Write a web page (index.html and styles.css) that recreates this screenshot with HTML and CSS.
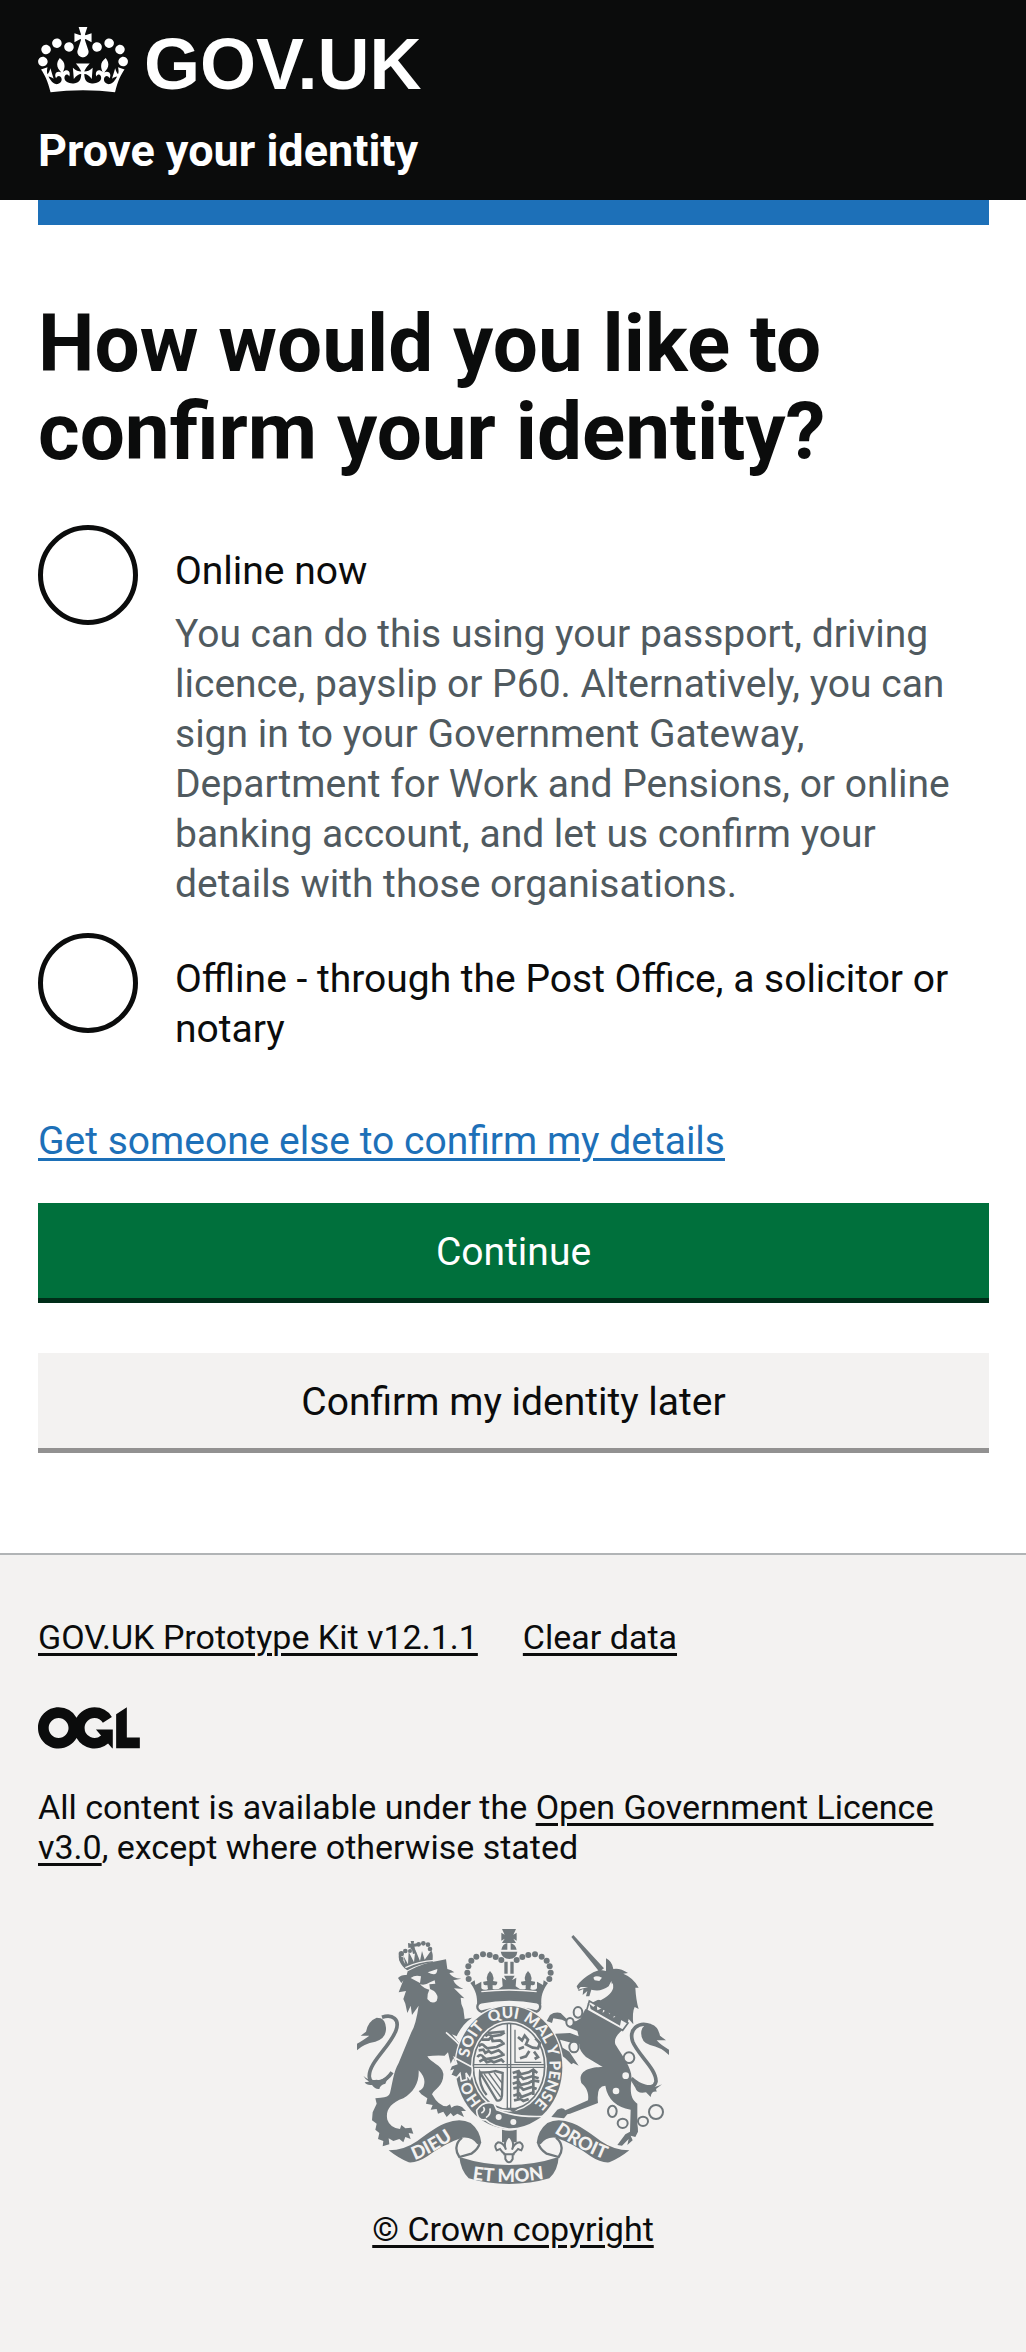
FILE: index.html
```
<!DOCTYPE html>
<html lang="en">
<head>
<meta charset="utf-8">
<meta name="viewport" content="width=device-width, initial-scale=1">
<title>How would you like to confirm your identity? - Prove your identity - GOV.UK</title>
<link rel="stylesheet" href="styles.css">
</head>
<body>
<header class="header">
  <a class="header-logo" href="#">
    <svg class="header-crown" viewBox="0 0 132 97" aria-hidden="true"><path fill="currentColor" fill-rule="evenodd" d="M25 30.2c3.5 1.5 7.7-.2 9.1-3.7 1.5-3.6-.2-7.8-3.9-9.2-3.6-1.4-7.6.3-9.1 3.9-1.4 3.5.3 7.5 3.9 9zM9 39.5c3.6 1.5 7.8-.2 9.2-3.7 1.5-3.6-.2-7.8-3.9-9.1-3.6-1.5-7.6.2-9.1 3.8-1.4 3.5.3 7.5 3.8 9zM4.4 57.2c3.5 1.5 7.7-.2 9.1-3.8 1.5-3.6-.2-7.7-3.9-9.1-3.5-1.5-7.6.3-9.1 3.8-1.4 3.5.3 7.6 3.9 9.1zm38.3-21.4c3.5 1.5 7.7-.2 9.1-3.8 1.5-3.6-.2-7.7-3.9-9.1-3.6-1.5-7.6.3-9.1 3.8-1.3 3.6.4 7.7 3.9 9.1zm64.4-5.6c-3.6 1.5-7.8-.2-9.1-3.7-1.5-3.6.2-7.8 3.8-9.2 3.6-1.4 7.7.3 9.2 3.9 1.3 3.5-.4 7.5-3.9 9zm15.9 9.3c-3.6 1.5-7.7-.2-9.1-3.7-1.5-3.6.2-7.8 3.7-9.1 3.6-1.5 7.7.2 9.2 3.8 1.5 3.5-.3 7.5-3.8 9zm4.7 17.7c-3.6 1.5-7.8-.2-9.2-3.8-1.5-3.6.2-7.7 3.9-9.1 3.6-1.5 7.7.3 9.2 3.8 1.3 3.5-.4 7.6-3.9 9.1zM89.3 35.8c-3.6 1.5-7.8-.2-9.2-3.8-1.4-3.6.2-7.7 3.9-9.1 3.6-1.5 7.7.3 9.2 3.8 1.4 3.6-.3 7.7-3.9 9.1zM69.7 17.7l8.9 4.7V9.3l-8.9 2.8c-.2-.3-.5-.6-.9-.9L72.4 0H59.6l3.5 11.2c-.3.3-.6.5-.9.9l-8.8-2.8v13.1l8.8-4.7c.3.3.6.7.9.9l-5 15.4v.1c-.2.8-.4 1.6-.4 2.4 0 4.1 3.1 7.5 7 8.1h.2c.3 0 .7.1 1 .1.4 0 .7 0 1-.1h.2c4-.6 7.1-4.1 7.1-8.1 0-.8-.1-1.7-.4-2.4V34l-5.1-15.4c.4-.2.7-.6 1-.9zM66 92.8c16.9 0 32.8 1.1 47.1 3.2 4-16.9 8.9-26.7 14-33.5l-9.6-3.4c1 4.9 1.1 7.2 0 10.2-1.5-1.4-3-4.3-4.2-8.7L108.6 76c2.8-2 5-3.2 7.5-3.3-4.4 9.4-10 11.9-13.6 11.2-4.3-.8-6.3-4.6-5.6-7.9 1-4.7 5.7-5.9 8-.5 4.3-8.7-3-11.4-7.6-8.8 7.1-7.2 7.9-13.5 2.1-21.1-8 6.1-8.1 12.3-4.5 20.8-4.7-5.4-12.1-2.5-9.5 6.2 3.4-5.2 7.9-2 7.2 3.1-.6 4.3-6.4 7.8-13.5 7.2-10.3-.9-10.9-8-11.2-13.8 2.5-.5 7.1 1.8 11 7.3L80.2 60c-4.1 4.4-8 5.3-12.3 5.4 1.4-4.4 8-11.6 8-11.6H55.5s6.4 7.2 7.9 11.6c-4.2-.1-8-1-12.3-5.4l1.4 16.4c3.9-5.5 8.5-7.7 10.9-7.3-.3 5.8-.9 12.8-11.1 13.8-7.2.6-12.9-2.9-13.5-7.2-.7-5 3.8-8.3 7.1-3.1 2.7-8.7-4.6-11.6-9.4-6.2 3.7-8.5 3.6-14.7-4.6-20.8-5.8 7.6-5 13.9 2.2 21.1-4.7-2.6-11.9.1-7.7 8.8 2.3-5.5 7.1-4.2 8.1.5.7 3.3-1.3 7.1-5.7 7.9-3.5.7-9-1.8-13.5-11.2 2.5.1 4.7 1.3 7.5 3.3l-4.7-15.4c-1.2 4.4-2.7 7.2-4.3 8.7-1.1-3-.9-5.3 0-10.2l-9.5 3.4c5 6.9 9.9 16.7 14 33.5 14.8-2.1 30.8-3.2 47.7-3.2z"/></svg>
    <span class="header-name">GOV.UK</span>
  </a>
  <a class="header-service" href="#">Prove your identity</a>
</header>

<div class="container">
  <main class="main">
    <form>
      <fieldset class="fieldset">
        <legend class="legend"><h1 class="heading">How would you like to confirm your identity?</h1></legend>
        <div class="radios">
          <div class="radio">
            <input class="radio-input" type="radio" id="online" name="method" value="online" aria-describedby="online-hint">
            <div class="radio-text">
              <label class="radio-label" for="online">Online now</label>
              <div class="hint" id="online-hint">You can do this using your passport, driving licence, payslip or P60. Alternatively, you can sign in to your Government Gateway, Department for Work and Pensions, or online banking account, and let us confirm your details with those organisations.</div>
            </div>
          </div>
          <div class="radio">
            <input class="radio-input" type="radio" id="offline" name="method" value="offline">
            <div class="radio-text">
              <label class="radio-label" for="offline">Offline - through the Post Office, a solicitor or notary</label>
            </div>
          </div>
        </div>
      </fieldset>
      <p class="other-way"><a class="link" href="#">Get someone else to confirm my details</a></p>
      <div class="button-group">
        <button class="button" type="submit">Continue</button>
        <button class="button button-secondary" type="button">Confirm my identity later</button>
      </div>
    </form>
  </main>
</div>

<footer class="footer">
  <ul class="footer-links">
    <li><a class="footer-link" href="#">GOV.UK Prototype Kit v12.1.1</a></li>
    <li><a class="footer-link" href="#">Clear data</a></li>
  </ul>
  <svg class="ogl" viewBox="0 0 484 196" aria-hidden="true"><path fill="currentColor" d="M421.5 142.8V.1l-50.7 32.3v161.1h112.4v-50.7zm-122.3-9.6A47.12 47.12 0 0 1 221 97.8c0-26 21.1-47.1 47.1-47.1 16.7 0 31.4 8.7 39.7 21.8l42.7-27.2A97.63 97.63 0 0 0 268.1 0c-36.5 0-68.3 20.1-85.1 49.7A98 98 0 0 0 97.8 0C43.9 0 0 43.9 0 97.8s43.9 97.8 97.8 97.8c36.5 0 68.3-20.1 85.1-49.7a97.76 97.76 0 0 0 149.6 25.4l19.4 22.2h3v-87.8h-80l24.3 27.5zM97.8 145c-26 0-47.1-21.1-47.1-47.1s21.1-47.1 47.1-47.1 47.1 21.1 47.1 47.1S123.8 145 97.8 145"/></svg>
  <p class="licence">All content is available under the <a class="footer-link" href="#">Open Government Licence v3.0</a>, except where otherwise stated</p>
  <div class="copyright">
    <svg class="crest" viewBox="51 60 936 765" aria-hidden="true">
      <defs>
        <path id="garter-line" d="M507 615A122 144 0 0 1 507 327A122 144 0 0 1 507 615"/>
        <path id="dieu-line" d="M224 753Q290 728 364 672"/>
        <path id="mon-line" d="M397 811Q507 828 624 808"/>
        <path id="droit-line" d="M642 670Q720 724 810 758"/>
      </defs>

      <!-- Crown -->
      <path d="M486 60h42l-8 17 10-6v24l-10-6 8 13h-42l8-13-10 6V71l10 6zM484 122q4-18 18-20v20zM512 102q14 4 18 20h-18zM482 128h50q-2 20-24 22-22-2-26-22z"/>
      <g>
        <circle cx="484" cy="153" r="9"/><circle cx="467" cy="144" r="9"/><circle cx="449" cy="138" r="9"/><circle cx="429" cy="136" r="9"/><circle cx="409" cy="143" r="9"/><circle cx="394" cy="155" r="9"/><circle cx="385" cy="172" r="9"/><circle cx="382" cy="191" r="9"/><circle cx="386" cy="210" r="9"/>
        <circle cx="530" cy="153" r="9"/><circle cx="547" cy="144" r="9"/><circle cx="565" cy="138" r="9"/><circle cx="585" cy="136" r="9"/><circle cx="605" cy="143" r="9"/><circle cx="620" cy="155" r="9"/><circle cx="629" cy="172" r="9"/><circle cx="632" cy="191" r="9"/><circle cx="628" cy="210" r="9"/>
      </g>
      <path d="M493 158h10v36h-10zM511 158h10v36h-10z"/>
      <path d="M411 286C413 258 404 240 391 222L404 214 406 228 424 218V238Q432 246 444 240L442 228Q428 232 430 218L442 216Q436 200 450 186 465 200 459 216L472 218Q472 232 458 228L458 240Q476 244 488 232L486 206 499 214 492 200H524L516 214 529 206 527 232Q540 244 557 240L557 228Q543 232 543 218L556 216Q550 200 564 186 579 200 573 216L585 218Q587 232 573 228L571 240Q584 246 591 238V218L609 228 611 214 624 222C611 240 602 258 604 286Q507 262 411 286Z"/>
      <path class="line" d="M424 248Q507 238 590 248" stroke-width="4"/>
      <path class="bare" d="M424 308C408 302 408 284 424 280Q507 264 592 280C604 284 604 302 590 308Q507 284 424 308Z" stroke-width="7"/>

      <!-- Lion -->
      <path d="M202 184C180 170 172 146 178 132L196 166 190 140 204 166 206 128 222 160 226 122 240 156 246 126 254 152 274 124C282 140 276 150 279 160Q238 164 202 184Z"/>
      <g><circle cx="184" cy="134" r="8"/><circle cx="184" cy="150" r="7"/><circle cx="196" cy="126" r="7"/><circle cx="210" cy="126" r="6"/><circle cx="236" cy="106" r="7"/><circle cx="250" cy="103" r="7"/><circle cx="264" cy="107" r="7"/><circle cx="270" cy="120" r="7"/><circle cx="217" cy="116" r="6"/></g>
      <path d="M204 102l10 2-2-8 10 0-1 8 10-1 2 9-10 1 6 20-10 2-5-20-9 2z"/>
      <path class="line" d="M196 176Q236 156 284 154" stroke-width="4"/>
      <path d="M174 207Q184 196 200 198L203 187Q252 160 292 156L318 151 322 180Q334 182 343 190L328 192Q336 208 364 209L340 214Q346 230 370 240L342 238Q360 256 373 268L362 266Q362 284 370 300L374 330 396 326Q366 346 350 382L336 376Q362 410 384 432 382 466 398 492L388 508 378 488 382 512 366 514 362 492 352 504 336 498 338 484 328 488Q332 470 348 464L340 448 332 464 324 430 314 440Q286 438 262 442C270 460 306 468 310 494 312 530 284 540 276 556Q296 592 320 592L330 586 334 596Q350 584 366 594L378 606 364 606 372 624 352 614 340 622 332 612 320 624 310 608 294 614 290 600 272 602 278 588 258 584 262 568 244 556 236 546Q250 540 252 528 258 506 236 484C238 520 222 550 190 568 150 582 136 606 142 632Q150 656 180 660L184 648 196 658 214 656 220 674 206 672 212 690 196 684 190 700 178 690 160 696 146 688 148 706 128 712 130 696 114 690 118 672 106 662 110 644 96 634 98 610 110 584 106 568 122 566Q146 566 150 552C158 520 160 490 176 462L214 370Q228 346 236 290L216 318 212 290 202 312 196 284 190 270 198 246 176 250 190 214 184 222Z"/>
      <path class="bare-fill" d="M212 207Q226 196 243 202L240 222ZM263 190Q276 186 292 180 292 206 263 190ZM240 226Q256 230 270 220L284 214 286 224 268 226 270 240 282 246Q298 260 290 276 276 288 262 270 262 252 268 242 254 240 240 226Z"/>
      <path class="line" d="M318 370Q350 396 372 424 380 450 376 470" stroke-width="5"/>
      <path class="stroke" d="M126 325C158 314 180 332 168 364 150 414 84 462 88 504 92 540 140 516 156 490" stroke-width="11"/>
      <path d="M51 404V424Q70 404 106 398 140 388 138 356 136 334 122 328L110 326Q84 336 78 368L62 380H88Q66 396 51 404ZM70 500Q84 516 110 512 130 516 148 496L136 524Q120 528 118 540 106 542 96 528 80 530 74 520L88 518Q76 512 70 500Z"/>

      <!-- Unicorn -->
      <path d="M694 84L700 78 792 178 778 188ZM798 148Q816 156 820 180 840 176 864 192L850 194Q880 206 896 236L886 236Q888 274 896 300L884 294Q876 310 880 346L866 330 860 352Q810 322 742 284 780 278 814 240 818 228 814 216L806 232Q782 250 754 242L748 262 738 262 742 246 728 258 730 240 716 246 710 232Q724 210 760 190L780 182 798 186Z"/>
      <path class="bare-fill" d="M760 206Q768 198 786 206L778 216 764 214ZM714 242L744 234 722 234ZM756 268Q802 254 818 222 828 250 782 274Z"/>
      <path d="M736 300L846 364C828 380 822 392 826 406 848 444 880 480 874 516 870 548 872 570 892 584V644Q894 656 894 668L886 684 872 680 878 694 862 708 866 690 846 710 832 708 856 676 870 668 872 602Q806 590 796 530 768 530 774 582L690 614 682 616 672 628 634 624 652 602Q668 592 676 604L744 574C748 548 736 532 724 522 712 486 748 474 788 474L738 444Q716 424 718 406L688 400 660 392 668 416 688 428 700 446 716 470 700 462 694 466 676 448 666 440 640 384 646 374 690 372 716 382 712 366 688 356 690 344 666 332 640 328 636 342 620 336 630 318Q644 308 662 312L684 334Q704 344 722 328Z"/>
      <path class="bare" d="M748 276L864 342 848 364 740 304Z" stroke-width="5"/>
      <path d="M752 300L748 284 760 294 770 284 772 304 790 296 788 312 800 300 808 316 826 308 820 326 836 318 844 330 840 350Z"/>
      <g class="bare" stroke-width="6"><ellipse cx="714" cy="310" rx="13" ry="16"/><ellipse cx="690" cy="340" rx="11" ry="13"/><ellipse cx="702" cy="414" rx="14" ry="16"/><circle cx="867" cy="446" r="16"/><ellipse cx="817" cy="607" rx="13" ry="17"/><ellipse cx="848" cy="643" rx="15" ry="14"/><ellipse cx="909" cy="637" rx="15" ry="14"/><circle cx="948" cy="609" r="21"/></g>
      <g class="bare-fill"><circle cx="857" cy="500" r="10"/><circle cx="828" cy="546" r="10"/></g>
      <path class="stroke" d="M932 350C894 336 866 362 878 398 894 438 950 480 948 518 940 550 892 526 874 508" stroke-width="11"/>
      <path d="M987 422V438Q962 414 930 408 900 398 904 366 908 344 934 346 954 352 960 380L978 394 950 394Q962 408 987 422ZM870 510Q890 532 914 534 936 540 966 526L948 540 950 548Q934 546 932 564L918 550Q892 556 886 536Z"/>

      <!-- Garter and shield -->
      <ellipse class="edge" cx="507" cy="475" rx="164" ry="188"/>
      <ellipse cx="507" cy="475" rx="160" ry="184"/>
      <ellipse class="bare-fill" cx="507" cy="472" rx="114" ry="136"/>
      <ellipse class="stroke" cx="507" cy="472" rx="107" ry="129" stroke-width="5"/>
      <path class="stroke" d="M502 344V600M512 344V600M400 467H614M400 475H614" stroke-width="4"/>
      <g class="stroke" stroke-width="8">
        <path d="M444 372l50-4M436 382q10-12 18 0l28-4 12-8M424 392h22l8-8 4 12 22-2 8 6M416 412q10-12 18 0l8 6 28-4 24-12M416 424l14-2 6 10 10-6 8 6 22-8 12 10M412 444q10-12 18 0l8 6 28-4 28-10M418 458l14-8 8 10 14-4 8 4 22-8 8 8"/>
        <path d="M534 384l12 10 8-14 10 12-6 14 20 10 16 2 6-16-14-14M552 414l-16 6M568 426l-10 16-18 6M582 428l12 16-10 6"/>
        <path d="M525 362V460H604" stroke-width="4"/>
        <path d="M518 492l18-6 6 10 24-6 14-8 12 10M520 506l22-4 8 8 26-8 20 6M518 524l18-6 6 10 24-6 14-8 18 4M520 538l22-4 8 8 26-8 14 6M520 560l18-6 6 10 22-8 14-6M522 574l20-4 8 6 16-6M534 486v86M580 484v74"/>
      </g>
      <path class="stroke" d="M420 490Q446 492 466 486L488 492 486 560Q484 578 470 574L420 490Q416 530 440 558" stroke-width="7"/>
      <path class="stroke" d="M432 494L482 564M446 492L484 544M462 490L486 522" stroke-width="4"/>
      <path d="M498 596H538L520 610Z"/>
      <g class="arms-text" font-size="46">
        <text><textPath href="#garter-line" startOffset="11%">HO</textPath></text>
        <text><textPath href="#garter-line" startOffset="28%">SOIT</textPath></text>
        <text><textPath href="#garter-line" startOffset="43%">QUI</textPath></text>
        <text><textPath href="#garter-line" startOffset="55%">MAL</textPath></text>
        <text><textPath href="#garter-line" startOffset="68%">Y</textPath></text>
        <text><textPath href="#garter-line" startOffset="73%">PENSE</textPath></text>
      </g>
      <path class="edge-fill" d="M410 604Q432 572 462 584L470 602Q530 626 612 622L590 636Q550 662 506 660 456 652 436 632 412 636 410 604Z"/>
      <circle class="bare-fill" cx="476" cy="624" r="9"/><circle class="bare-fill" cx="520" cy="639" r="9"/>
      <path class="line" d="M424 612Q438 604 430 594M438 626Q454 616 450 598" stroke-width="5"/>
      <path class="edge-fill" d="M396 474Q400 490 390 510L378 492 380 512 364 516 360 494 350 506 332 498 338 484 326 488 334 470 350 464 344 446Z"/>

      <!-- Motto ribbon -->
      <path d="M486 662Q507 668 530 662V700H486Z"/>
      <path class="bare" d="M507 682Q526 700 516 722 524 700 540 700 554 708 544 724L534 720Q526 730 518 736L518 750Q507 770 496 750L496 736Q486 730 480 720L470 724Q460 708 474 700 490 700 498 722 488 700 507 682ZM490 736H524" stroke-width="6"/>
      <path d="M146 724Q192 724 232 696 290 652 318 642 360 626 392 642 420 664 424 702L412 706Q396 682 366 686 312 704 262 742 232 762 206 760 176 748 146 724Z"/>
      <path d="M868 724Q822 724 782 696 724 652 696 642 654 626 622 642 594 664 590 702L602 706Q618 682 648 686 702 704 752 742 782 762 808 760 838 748 868 724Z"/>
      <path class="stroke" d="M366 686C344 704 346 728 358 744L394 734Q416 720 420 700M648 686C670 704 668 728 656 744L620 734Q598 720 594 700" stroke-width="7"/>
      <path d="M358 744Q432 768 507 768T656 744Q654 784 628 808 572 825 507 825T386 808Q362 784 358 744Z"/>
      <g class="arms-text" font-size="55">
        <text><textPath href="#dieu-line">DIEU</textPath></text>
        <text><textPath href="#mon-line">ET MON</textPath></text>
        <text><textPath href="#droit-line">DROIT</textPath></text>
      </g>
    </svg>
    <a class="footer-link" href="#">© Crown copyright</a>
  </div>
</footer>
</body>
</html>
```
FILE: styles.css
```
* {
  box-sizing: border-box;
}

body {
  margin: 0;
  background: #f3f2f1;
  color: #0b0c0c;
  font-family: Roboto, "Liberation Sans", sans-serif;
  font-size: 39px;
  line-height: 50px;
}

.header {
  display: flex;
  flex-direction: column;
  align-items: flex-start;
  gap: 33px;
  padding: 27px 38px 24px;
  background: #0b0c0c;
  color: #ffffff;
}

.header-logo {
  display: flex;
  gap: 16px;
  color: inherit;
  text-decoration: none;
}

.header-crown {
  display: block;
  width: 90px;
  height: 66px;
}

.header-name {
  height: 66px;
  font-family: "Liberation Sans", Arial, sans-serif;
  font-size: 72px;
  font-weight: 700;
  line-height: 75px;
}

.header-service {
  color: inherit;
  font-size: 45px;
  font-weight: 700;
  text-decoration: none;
}

.container {
  padding: 0 37px 0 38px;
  background: #ffffff;
}

.main {
  padding: 75px 0 100px;
  border-top: 25px solid #1d70b8;
}

.fieldset {
  min-width: 0;
  margin: 0;
  padding: 0;
  border: 0;
}

.legend {
  padding: 0;
}

.heading {
  margin: 0;
  font-size: 80px;
  font-weight: 700;
  line-height: 88px;
}

.radios {
  display: flex;
  flex-direction: column;
  gap: 24px;
  padding-top: 49px;
}

.radio {
  display: grid;
  grid-template-columns: 100px 1fr;
  align-items: start;
  gap: 37px;
}

.radio-input {
  appearance: none;
  width: 100px;
  height: 100px;
  margin: 0;
  border: 5px solid #0b0c0c;
  border-radius: 50%;
  background: transparent;
}

.radio-input:checked {
  background: radial-gradient(circle, #0b0c0c 25px, transparent 26px);
}

.radio-text {
  display: flex;
  flex-direction: column;
  gap: 13px;
  padding-top: 21px;
}

.hint {
  color: #505a5f;
}

.other-way {
  margin: 62px 0 37px;
}

.link,
.footer-link {
  color: #1d70b8;
  text-decoration: underline;
  text-decoration-thickness: 3px;
  text-underline-offset: 4px;
}

.footer-link {
  color: #0b0c0c;
}

.button-group {
  display: flex;
  flex-direction: column;
  gap: 50px;
}

.button {
  padding: 24px 25px 21px;
  border: 0;
  border-bottom: 5px solid #002d18;
  border-radius: 0;
  background: #00703c;
  color: #ffffff;
  font: inherit;
}

.button-secondary {
  border-bottom-color: #929191;
  background: #f3f2f1;
  color: #0b0c0c;
}

.footer {
  padding: 62px 38px 102px;
  border-top: 2px solid #b1b4b6;
  font-size: 34px;
  line-height: 40px;
}

.footer-links {
  display: flex;
  flex-wrap: wrap;
  gap: 12px 45px;
  margin: 0 0 50px;
  padding: 0;
  list-style: none;
}

.ogl {
  display: block;
  width: 102px;
  height: 42px;
}

.licence {
  margin: 38px 0 62px;
}

.copyright {
  display: flex;
  flex-direction: column;
  align-items: center;
  gap: 25px;
}

.crest {
  width: 312px;
  height: 255px;
  fill: #6f777b;
}

.crest .bare {
  fill: #f3f2f1;
  stroke: #6f777b;
}

.crest .bare-fill {
  fill: #f3f2f1;
}

.crest .line {
  fill: none;
  stroke: #f3f2f1;
}

.crest .stroke {
  fill: none;
  stroke: #6f777b;
}

.crest .edge {
  fill: #f3f2f1;
}

.crest .edge-fill {
  stroke: #f3f2f1;
  stroke-width: 5px;
}

.crest .arms-text {
  fill: #f3f2f1;
  font-family: Lato, sans-serif;
  font-weight: 900;
}
```
